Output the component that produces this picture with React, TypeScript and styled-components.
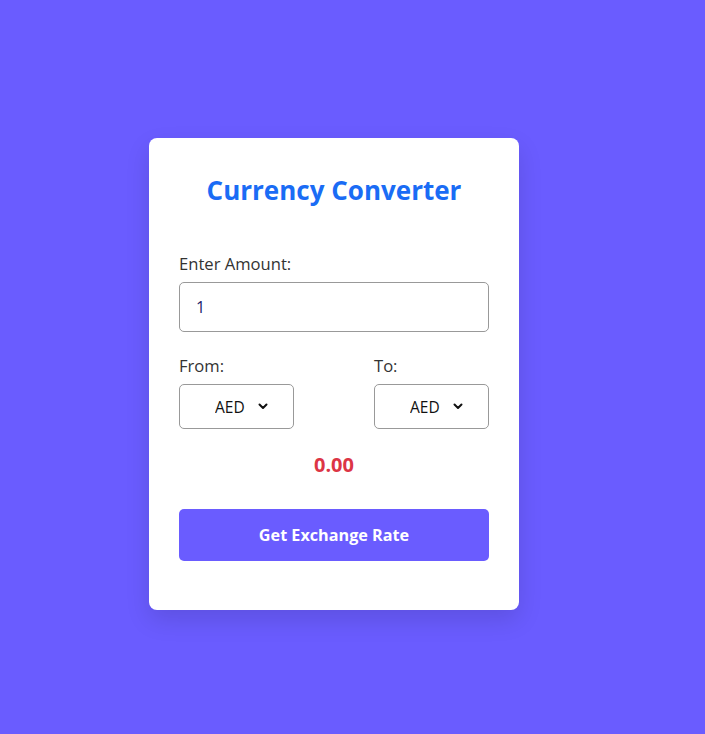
import React, { useState } from "react";
import styled, { createGlobalStyle } from "styled-components";

const Global = createGlobalStyle`
  html, body { margin: 0; padding: 0; }
  body {
    background: #6a5cff;
    font-family: "Open Sans", "Noto Sans", sans-serif;
  }
  * { box-sizing: border-box; }
`;

const Page = styled.div`
  min-height: 734px;
  display: flex;
  justify-content: center;
  align-items: flex-start;
  padding: 138px 37px 0 0;
`;

const Card = styled.div`
  width: 370px;
  background: #fff;
  border-radius: 8px;
  padding: 30px 30px 49px;
  box-shadow: 0 10px 25px rgba(0, 0, 0, 0.12);
  display: flex;
  flex-direction: column;
`;

const Title = styled.h2`
  margin: 0;
  height: 44px;
  line-height: 44px;
  text-align: center;
  color: #1a6cf5;
  font-size: 26px;
  font-weight: 700;
`;

const Field = styled.div<{ $mt: number }>`
  display: flex;
  flex-direction: column;
  gap: 7px;
  margin-top: ${(p) => p.$mt}px;
`;

const Label = styled.label`
  font-size: 16.6px;
  line-height: 22px;
  color: #333;
`;

const AmountInput = styled.input`
  width: 100%;
  height: 50px;
  border: 1px solid #999;
  border-radius: 5px;
  padding: 0 16px;
  font-family: inherit;
  font-size: 16px;
  color: #1d1d6b;
  outline: none;
`;

const Row = styled.div`
  display: flex;
  justify-content: space-between;
  margin-top: 23px;
`;

const Column = styled.div`
  display: flex;
  flex-direction: column;
  gap: 7px;
  width: 115px;
`;

const SelectWrap = styled.div`
  position: relative;
  width: 115px;
  height: 45px;
`;

const Select = styled.select`
  appearance: none;
  -webkit-appearance: none;
  width: 100%;
  height: 100%;
  border: 1px solid #999;
  border-radius: 5px;
  background: #fff;
  font-family: inherit;
  font-size: 15.5px;
  color: #111;
  padding: 0 0 0 35px;
  outline: none;
`;

const Chevron = styled.svg`
  position: absolute;
  left: 79px;
  top: 19px;
  pointer-events: none;
`;

const Result = styled.div`
  margin-top: 23px;
  text-align: center;
  font-size: 20px;
  line-height: 26px;
  font-weight: 700;
  color: #dc3545;
`;

const Button = styled.button`
  margin-top: 31px;
  height: 52px;
  width: 100%;
  border: none;
  border-radius: 5px;
  background: #6a5cff;
  color: #fff;
  font-family: inherit;
  font-size: 16.2px;
  font-weight: 700;
  cursor: pointer;
`;

const currencies = ["AED", "USD", "EUR", "GBP", "INR"];

function CurrencySelect({ value, onChange }: { value: string; onChange: (v: string) => void }) {
  return (
    <SelectWrap>
      <Select value={value} onChange={(e) => onChange(e.target.value)}>
        {currencies.map((c) => (
          <option key={c} value={c}>
            {c}
          </option>
        ))}
      </Select>
      <Chevron width="10" height="7" viewBox="0 0 10 7">
        <path d="M1.5 1.5 L5 5 L8.5 1.5" fill="none" stroke="#111" strokeWidth="2" strokeLinecap="round" strokeLinejoin="round" />
      </Chevron>
    </SelectWrap>
  );
}

export default function App() {
  const [amount, setAmount] = useState("1");
  const [from, setFrom] = useState("AED");
  const [to, setTo] = useState("AED");
  return (
    <>
      <Global />
      <Page>
        <Card>
          <Title>Currency Converter</Title>
          <Field $mt={41}>
            <Label>Enter Amount:</Label>
            <AmountInput value={amount} onChange={(e) => setAmount(e.target.value)} />
          </Field>
          <Row>
            <Column>
              <Label>From:</Label>
              <CurrencySelect value={from} onChange={setFrom} />
            </Column>
            <Column>
              <Label>To:</Label>
              <CurrencySelect value={to} onChange={setTo} />
            </Column>
          </Row>
          <Result>0.00</Result>
          <Button>Get Exchange Rate</Button>
        </Card>
      </Page>
    </>
  );
}
